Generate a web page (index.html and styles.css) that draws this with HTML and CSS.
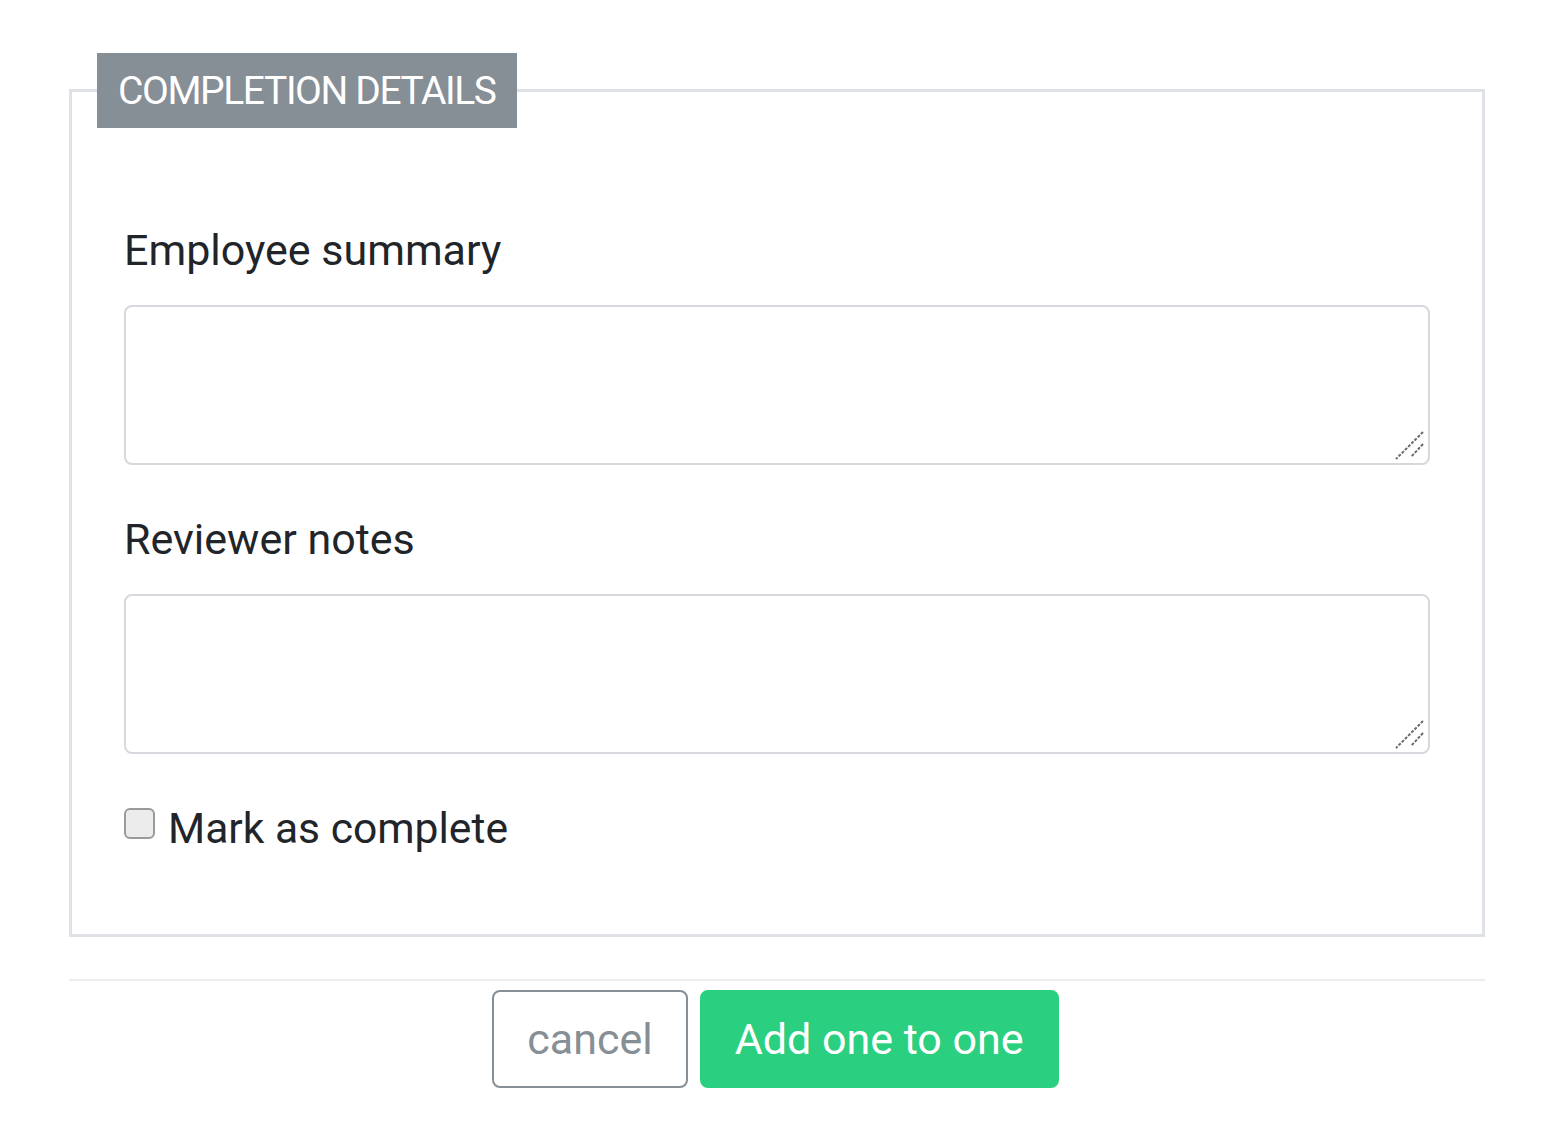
FILE: index.html
```html
<!DOCTYPE html>
<html lang="en">
<head>
<meta charset="utf-8">
<title>Completion details</title>
<link rel="stylesheet" href="styles.css">
</head>
<body>
<form class="page">
  <fieldset class="panel">
    <legend class="panel-title">COMPLETION DETAILS</legend>
    <div class="group">
      <label class="field-label" for="summary">Employee summary</label>
      <div class="area-wrap">
        <textarea id="summary" class="area"></textarea>
        <svg class="grip" width="34" height="34" viewBox="0 0 34 34" aria-hidden="true">
          <line x1="29" y1="3" x2="2" y2="30" />
          <line x1="29" y1="15" x2="17" y2="28" />
        </svg>
      </div>
    </div>
    <div class="group">
      <label class="field-label" for="notes">Reviewer notes</label>
      <div class="area-wrap">
        <textarea id="notes" class="area"></textarea>
        <svg class="grip" width="34" height="34" viewBox="0 0 34 34" aria-hidden="true">
          <line x1="29" y1="3" x2="2" y2="30" />
          <line x1="29" y1="15" x2="17" y2="28" />
        </svg>
      </div>
    </div>
    <div class="check-row">
      <input type="checkbox" id="complete" class="check">
      <label for="complete" class="check-label">Mark as complete</label>
    </div>
  </fieldset>
  <hr class="divider">
  <div class="actions">
    <button type="button" class="btn btn-cancel">cancel</button>
    <button type="button" class="btn btn-primary">Add one to one</button>
  </div>
</form>
</body>
</html>
```
FILE: styles.css
```css
* { box-sizing: border-box; }

body {
  margin: 0;
  padding-top: 53px;
  background: #ffffff;
  font-family: Roboto, "Liberation Sans", sans-serif;
  color: #212529;
}

.page {
  margin-left: 69px;
  width: 1416px;
}

.panel {
  margin: 0;
  min-width: 0;
  border: 3px solid #dee2e6;
  padding: 0 52px 80px 52px;
}

.panel-title {
  margin-left: -27px;
  padding: 0 21px 0 21px;
  height: 75px;
  line-height: 76px;
  background: #868e96;
  color: #ffffff;
  font-size: 39px;
  letter-spacing: -1.4px;
  font-weight: 400;
}

.group { margin-bottom: 48px; }
.group:first-of-type { margin-top: 96px; }

.field-label {
  display: block;
  font-size: 43px;
  line-height: 52px;
  margin-bottom: 29px;
  color: #212529;
}

.area-wrap { position: relative; }

.area {
  display: block;
  width: 100%;
  height: 160px;
  border: 2px solid #d5d9de;
  border-radius: 8px;
  resize: none;
  font: inherit;
  margin: 0;
}

.grip {
  position: absolute;
  right: 2px;
  bottom: 2px;
  stroke: #6a6a6a;
  stroke-width: 2;
  stroke-dasharray: 3 1.5;
}

.check-row {
  display: flex;
  align-items: center;
  gap: 13px;
}

.check {
  appearance: none;
  -webkit-appearance: none;
  margin: 0 0 9px 0;
  width: 31px;
  height: 31px;
  border: 2px solid #9a9a9a;
  border-radius: 6px;
  background: #ececec;
}

.check-label {
  font-size: 42.6px;
  line-height: 52px;
  color: #212529;
}

.divider {
  margin: 42px 0 0 0;
  border: 0;
  border-top: 2px solid #ececec;
}

.actions {
  display: flex;
  justify-content: center;
  gap: 12px;
  margin-top: 9px;
  padding-right: 3px;
}

.btn {
  height: 98px;
  padding: 0 33px;
  border-radius: 8px;
  font-family: Roboto, "Liberation Sans", sans-serif;
  font-size: 43px;
  display: inline-flex;
  align-items: center;
  cursor: pointer;
}

.btn-cancel {
  background: #ffffff;
  border: 2px solid #868e96;
  color: #868e96;
}

.btn-primary {
  background: #2ad07f;
  border: 2px solid #2ad07f;
  color: #ffffff;
}
```
